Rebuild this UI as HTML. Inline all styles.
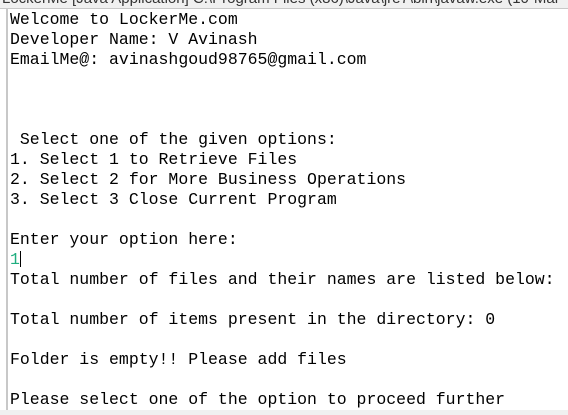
<!DOCTYPE html>
<html><head><style>
body{margin:0;width:568px;height:415px;overflow:hidden;background:#fff;position:relative;font-family:"Liberation Mono","Courier New",monospace;}
.tb{position:absolute;left:0;top:0;width:568px;height:8px;background:#f0f0f0;border-bottom:1px solid #c8c8c8;overflow:hidden;}
.tb span{position:absolute;left:2px;top:-10px;font-family:"Liberation Sans",sans-serif;font-size:15px;color:#333;white-space:nowrap;}
.lb{position:absolute;left:6px;top:9px;width:2px;height:406px;background:#c8c8c8;}
.bb{position:absolute;left:0;top:410px;width:568px;height:5px;background:#f0f0f0;}
pre{position:absolute;left:10px;top:10px;margin:0;font-family:inherit;font-size:16.5px;line-height:20px;color:#000;}
.g{color:#1fae7f}
.c{display:inline-block;width:1px;height:16px;background:#000;vertical-align:-3px}
</style></head><body>
<div class="tb"><span>LockerMe [Java Application] C:\Program Files (x86)\Java\jre7\bin\javaw.exe (10-Mar</span></div>
<div class="lb"></div>
<pre>Welcome to LockerMe.com
Developer Name: V Avinash
EmailMe@: avinashgoud98765@gmail.com



 Select one of the given options:
1. Select 1 to Retrieve Files
2. Select 2 for More Business Operations
3. Select 3 Close Current Program

Enter your option here:
<span class="g">1</span><span class="c"></span>
Total number of files and their names are listed below:

Total number of items present in the directory: 0

Folder is empty!! Please add files

Please select one of the option to proceed further</pre>
<div class="bb"></div>
</body></html>
